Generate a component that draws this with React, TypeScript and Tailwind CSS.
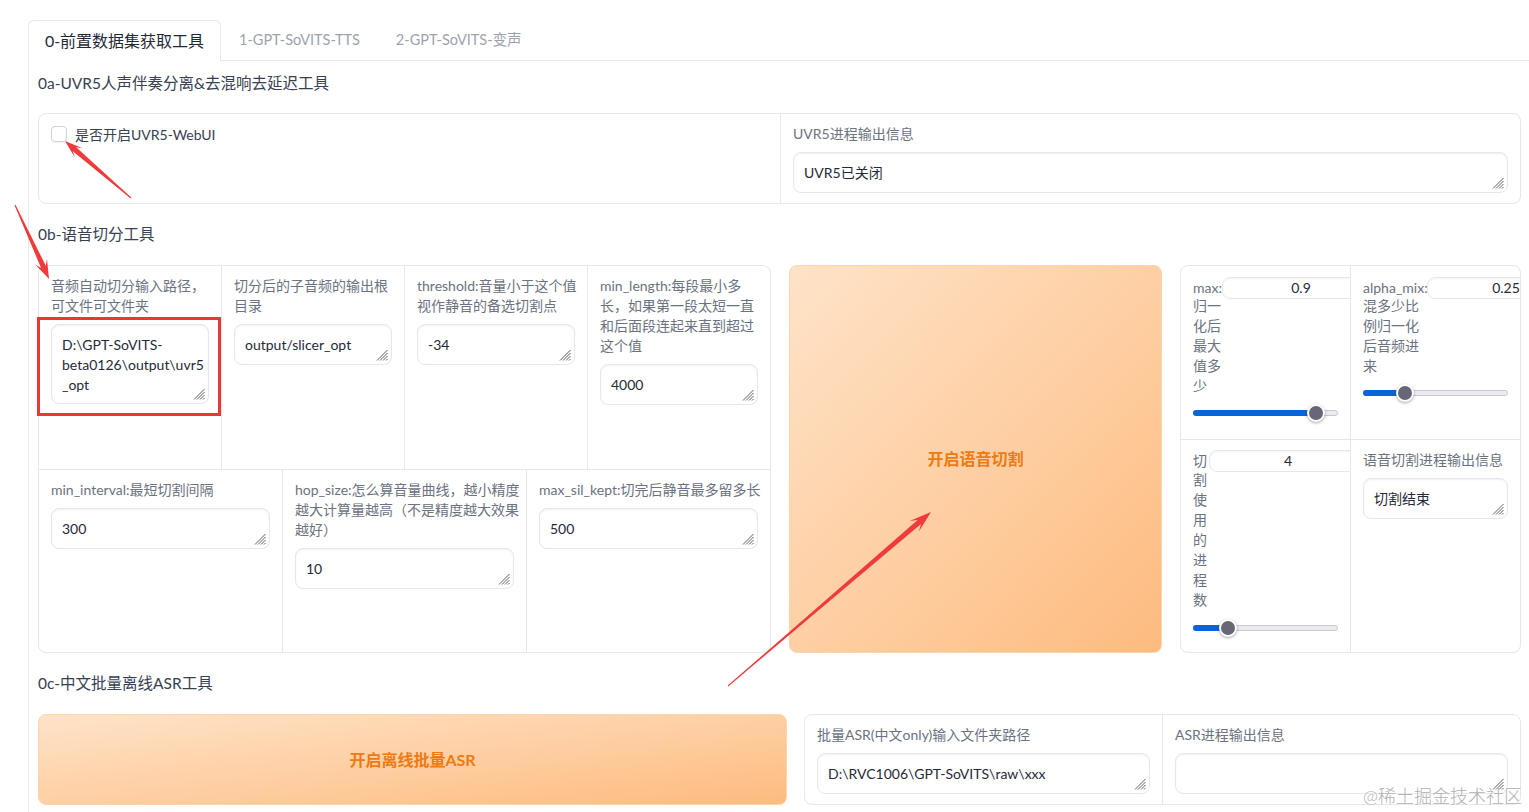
import React from "react";

function Handle() {
  return (
    <svg width="12" height="12" viewBox="0 0 12 12" className="absolute right-[3px] bottom-[3px]">
      <path d="M11.5 1 L1 11.5 M11.5 4 L4 11.5 M11.5 7 L7 11.5 M11.5 10 L10 11.5" stroke="#5f5f5f" strokeWidth="1" fill="none" />
    </svg>
  );
}

function TA({ lines, tall }: { lines: string[]; tall?: boolean }) {
  return (
    <div
      className={
        "relative w-full shrink-0 overflow-hidden rounded-lg border border-[#e5e7eb] bg-white px-[10px] pt-[10px] text-[14px] leading-[20px] text-[#1f2937] shadow-[inset_0_1px_2px_rgba(0,0,0,0.06)] " +
        (tall ? "h-[80px]" : "h-[41px]")
      }
    >
      {lines.map((l, i) => (
        <div key={i} className="whitespace-nowrap">
          {l}
        </div>
      ))}
      <Handle />
    </div>
  );
}

function Label({ lines }: { lines: string[] }) {
  return (
    <div className="text-[14px] leading-[20px] text-[#6b7280]">
      {lines.map((l, i) => (
        <div key={i} className="whitespace-nowrap">
          {l}
        </div>
      ))}
    </div>
  );
}

function Field({ label, value, tall, border }: { label: string[]; value: string[]; tall?: boolean; border?: boolean }) {
  return (
    <div className={"flex min-w-0 flex-1 flex-col gap-[8px] px-[12px] pt-[10px] " + (border ? "border-l border-[#e5e7eb]" : "")}>
      <Label lines={label} />
      <TA lines={value} tall={tall} />
    </div>
  );
}

function NumInput({ v }: { v: string }) {
  return (
    <div className="h-[22px] w-[158px] shrink-0 rounded-lg border border-[#e5e7eb] bg-white text-center text-[14px] leading-[20px] text-[#1f2937] shadow-[inset_0_1px_2px_rgba(0,0,0,0.05)]">
      {v}
    </div>
  );
}

function Slider({ pos, mt }: { pos: number; mt: string }) {
  return (
    <div className={"relative h-[18px] w-full " + mt}>
      <div className="absolute left-0 right-0 top-[6px] h-[6px] rounded-full border border-[#c9c9d1] bg-[#ececf0]" />
      <div className="absolute left-0 top-[6px] h-[6px] rounded-full bg-[#0b63d9]" style={{ width: pos }} />
      <div
        className="absolute top-0 h-[18px] w-[18px] rounded-full border-2 border-white bg-[#676778] shadow-[0_1px_3px_rgba(0,0,0,0.35)]"
        style={{ left: pos - 9 }}
      />
    </div>
  );
}

function OrangeButton({ text, cls }: { text: string; cls: string }) {
  return (
    <button
      className={
        "flex shrink-0 items-center justify-center rounded-lg border border-[#fdd5ad] bg-gradient-to-br from-[#fee3c8] to-[#fdbb7e] text-[16px] font-bold text-[#ee7a12] " +
        cls
      }
    >
      {text}
    </button>
  );
}

function arrowPts(tx: number, ty: number, hx: number, hy: number, L: number, W: number) {
  const dx = hx - tx;
  const dy = hy - ty;
  const len = Math.hypot(dx, dy);
  const ux = dx / len;
  const uy = dy / len;
  const nx = -uy;
  const ny = ux;
  const neck = 2.6;
  const tail = 0.5;
  const bx = hx - ux * L;
  const by = hy - uy * L;
  const kx = hx - ux * L * 0.7;
  const ky = hy - uy * L * 0.7;
  const p = [
    [tx + nx * tail, ty + ny * tail],
    [kx + nx * neck, ky + ny * neck],
    [bx + nx * W, by + ny * W],
    [hx, hy],
    [bx - nx * W, by - ny * W],
    [kx - nx * neck, ky - ny * neck],
    [tx - nx * tail, ty - ny * tail],
  ];
  return p.map((q) => q[0].toFixed(1) + "," + q[1].toFixed(1)).join(" ");
}

export default function App() {
  return (
    <div className="relative h-[812px] w-[1529px] overflow-hidden bg-white font-['Lato','Noto_Sans_CJK_SC',sans-serif]">
      <div className="flex h-full flex-col pl-[28px] pt-[20px]">
        {/* tabs */}
        <div className="flex h-[41px] shrink-0">
          <div className="flex w-[193px] shrink-0 items-center justify-center rounded-t-[6px] border-x border-t border-[#e5e7eb] bg-white text-[16px] text-[#1f2937]">
            0-前置数据集获取工具
          </div>
          <div className="flex items-center border-b border-[#e5e7eb] px-[18px] text-[14.5px] text-[#9ca3af]">1-GPT-SoVITS-TTS</div>
          <div className="flex items-center border-b border-[#e5e7eb] px-[18px] text-[14.5px] text-[#9ca3af]">2-GPT-SoVITS-变声</div>
          <div className="flex-1 border-b border-[#e5e7eb]" />
        </div>

        {/* panel */}
        <div className="flex w-[1503px] flex-1 flex-col border-l border-[#e5e7eb] pl-[9px] pt-[9px]">
          <div className="flex h-[28px] items-center text-[15.5px] text-[#374151]">0a-UVR5人声伴奏分离&amp;去混响去延迟工具</div>

          {/* block 1 */}
          <div className="mt-[15px] flex h-[91px] w-[1483px] overflow-hidden rounded-lg border border-[#e5e7eb]">
            <div className="w-[742px] shrink-0 border-r border-[#e5e7eb] px-[12px] pt-[10px]">
              <label className="flex h-[20px] items-center gap-[8px] text-[14px] text-[#374151]">
                <span className="h-[16px] w-[16px] rounded-[4px] border border-[#d1d5db] bg-white shadow-[0_1px_1px_rgba(0,0,0,0.05)]" />
                是否开启UVR5-WebUI
              </label>
            </div>
            <Field label={["UVR5进程输出信息"]} value={["UVR5已关闭"]} />
          </div>

          <div className="mt-[17px] flex h-[28px] items-center text-[15.5px] text-[#374151]">0b-语音切分工具</div>

          {/* block 2 */}
          <div className="mt-[16px] flex h-[388px] w-[1483px] gap-[18px]">
            <div className="flex w-[733px] shrink-0 flex-col overflow-hidden rounded-lg border border-[#e5e7eb]">
              <div className="flex h-[204px] shrink-0 border-b border-[#e5e7eb]">
                <Field label={["音频自动切分输入路径，", "可文件可文件夹"]} value={["D:\\GPT-SoVITS-", "beta0126\\output\\uvr5", "_opt"]} tall />
                <Field border label={["切分后的子音频的输出根", "目录"]} value={["output/slicer_opt"]} />
                <Field border label={["threshold:音量小于这个值", "视作静音的备选切割点"]} value={["-34"]} />
                <Field border label={["min_length:每段最小多", "长，如果第一段太短一直", "和后面段连起来直到超过", "这个值"]} value={["4000"]} />
              </div>
              <div className="flex flex-1">
                <Field label={["min_interval:最短切割间隔"]} value={["300"]} />
                <Field border label={["hop_size:怎么算音量曲线，越小精度", "越大计算量越高（不是精度越大效果", "越好）"]} value={["10"]} />
                <Field border label={["max_sil_kept:切完后静音最多留多长"]} value={["500"]} />
              </div>
            </div>

            <OrangeButton text="开启语音切割" cls="h-[388px] w-[373px]" />

            <div className="flex w-[341px] shrink-0 flex-col overflow-hidden rounded-lg border border-[#e5e7eb]">
              <div className="flex h-[174px] shrink-0 border-b border-[#e5e7eb]">
                <div className="flex w-[170px] shrink-0 flex-col overflow-hidden border-r border-[#e5e7eb] px-[12px] pt-[11px]">
                  <div className="flex h-[22px] items-center">
                    <span className="w-[29px] shrink-0 whitespace-nowrap text-[14px] leading-[20px] text-[#6b7280]">max:</span>
                    <NumInput v="0.9" />
                  </div>
                  <div className="mt-[-3px]">
                    <Label lines={["归一", "化后", "最大", "值多", "少"]} />
                  </div>
                  <Slider pos={123} mt="mt-[8px]" />
                </div>
                <div className="flex min-w-0 flex-1 flex-col overflow-hidden px-[12px] pt-[11px]">
                  <div className="flex h-[22px] items-center">
                    <span className="w-[64px] shrink-0 whitespace-nowrap text-[14px] leading-[20px] text-[#6b7280]">alpha_mix:</span>
                    <NumInput v="0.25" />
                  </div>
                  <div className="mt-[-3px]">
                    <Label lines={["混多少比", "例归一化", "后音频进", "来"]} />
                  </div>
                  <Slider pos={42} mt="mt-[8px]" />
                </div>
              </div>
              <div className="flex flex-1">
                <div className="flex w-[170px] shrink-0 flex-col overflow-hidden border-r border-[#e5e7eb] px-[12px] pt-[10px]">
                  <div className="flex h-[22px] items-center">
                    <span className="w-[16px] shrink-0 text-[14px] leading-[20px] text-[#6b7280]">切</span>
                    <NumInput v="4" />
                  </div>
                  <div className="mt-[-2px]">
                    <Label lines={["割", "使", "用", "的", "进", "程", "数"]} />
                  </div>
                  <Slider pos={35} mt="mt-[9px]" />
                </div>
                <Field label={["语音切割进程输出信息"]} value={["切割结束"]} />
              </div>
            </div>
          </div>

          <div className="mt-[17px] flex h-[28px] items-center text-[15.5px] text-[#374151]">0c-中文批量离线ASR工具</div>

          {/* block 3 */}
          <div className="mt-[16px] flex h-[91px] w-[1483px] gap-[17px]">
            <OrangeButton text="开启离线批量ASR" cls="h-[91px] w-[749px]" />
            <div className="flex flex-1 overflow-hidden rounded-lg border border-[#e5e7eb]">
              <div className="flex w-[358px] shrink-0 border-r border-[#e5e7eb]">
                <Field label={["批量ASR(中文only)输入文件夹路径"]} value={["D:\\RVC1006\\GPT-SoVITS\\raw\\xxx"]} />
              </div>
              <Field label={["ASR进程输出信息"]} value={[""]} />
            </div>
          </div>
        </div>
      </div>

      {/* annotations */}
      <div className="pointer-events-none absolute left-[37px] top-[317px] h-[99px] w-[184px] border-[3px] border-[#e53935]" />
      <svg className="pointer-events-none absolute left-0 top-0" width="1529" height="812" viewBox="0 0 1529 812">
        <polygon points={arrowPts(131, 198, 65, 141, 18, 6)} fill="#ef3b3b" />
        <polygon points={arrowPts(15, 205, 49, 279, 19, 6.5)} fill="#ef3b3b" />
        <polygon points={arrowPts(728, 686, 931, 512, 22, 7)} fill="#ef3b3b" />
      </svg>
      <div className="pointer-events-none absolute bottom-[2px] right-[7px] text-[18px] font-light text-[#b0b0b0] [text-shadow:0_0_2px_#fff]">
        @稀土掘金技术社区
      </div>
    </div>
  );
}
